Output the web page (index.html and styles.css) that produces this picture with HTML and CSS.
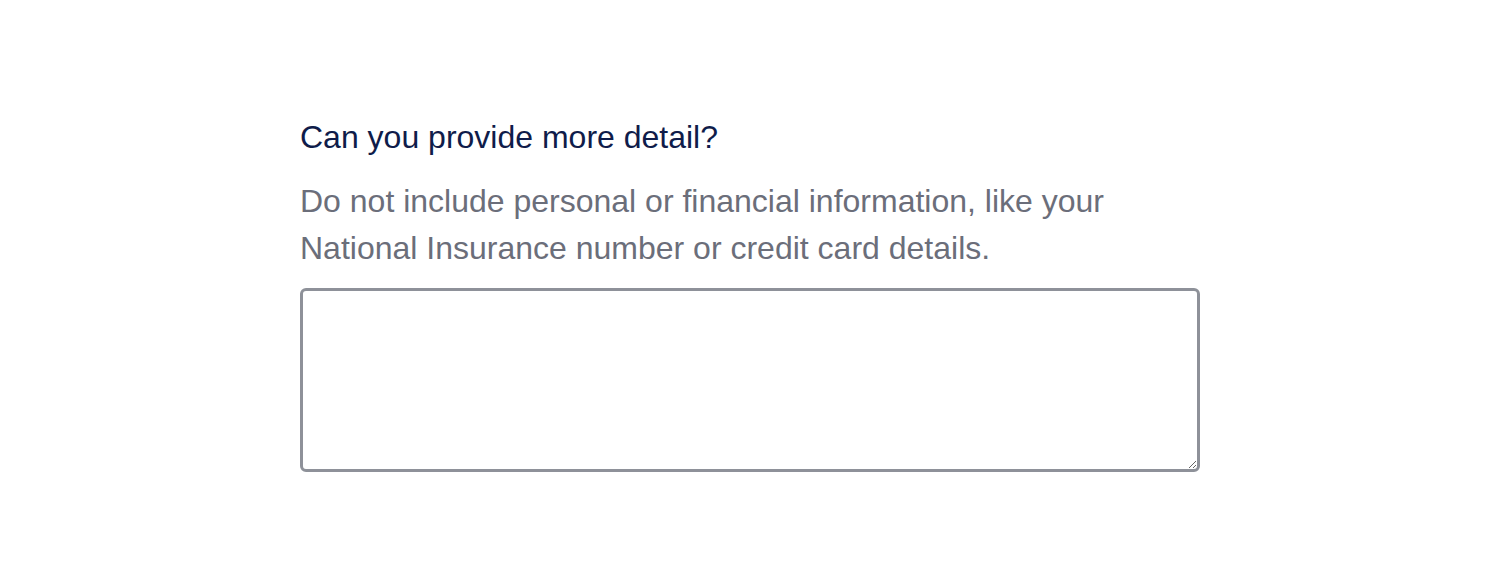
FILE: index.html
```html
<!DOCTYPE html>
<html lang="en">
<head>
<meta charset="utf-8">
<title>More detail</title>
<link rel="stylesheet" href="styles.css">
</head>
<body>
<main class="page">
  <div class="field">
    <label class="label" for="detail">Can you provide more detail?</label>
    <p class="hint">Do not include personal or financial information, like your<br>National Insurance number or credit card details.</p>
    <textarea class="textarea" id="detail" rows="5"></textarea>
  </div>
</main>
</body>
</html>
```

FILE: styles.css
```css
html, body {
  margin: 0;
  padding: 0;
  background: #ffffff;
}
body {
  font-family: "Liberation Sans", Arial, sans-serif;
}
.page {
  width: 900px;
  margin: 0 auto;
  padding-top: 113px;
}
.field {
  display: flex;
  flex-direction: column;
}
.label {
  font-size: 32px;
  line-height: 48px;
  color: #0f1c4a;
}
.hint {
  margin: 17px 0 16px;
  font-size: 32px;
  line-height: 47px;
  color: #6b6e7a;
}
.textarea {
  box-sizing: border-box;
  width: 900px;
  height: 184px;
  border: 3px solid #8e9199;
  border-radius: 6px;
  font-family: inherit;
  font-size: 24px;
}
```
